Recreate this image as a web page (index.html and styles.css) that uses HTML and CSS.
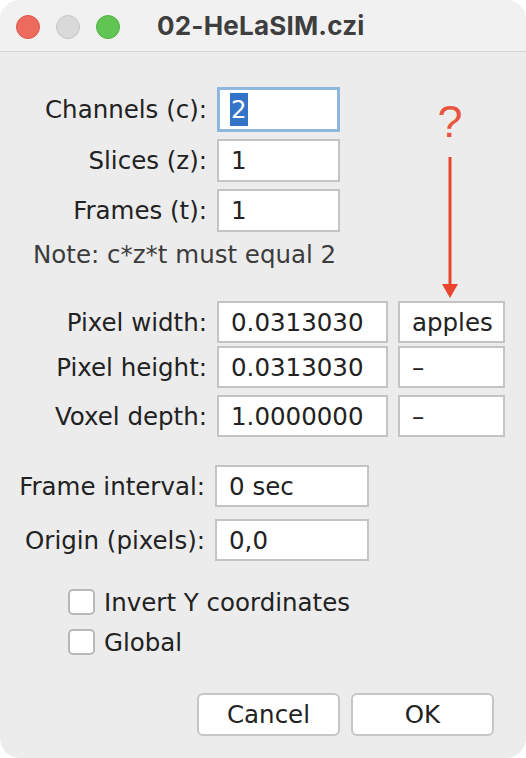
FILE: index.html
```html
<!DOCTYPE html>
<html>
<head>
<meta charset="utf-8">
<link rel="stylesheet" href="styles.css">
</head>
<body>
<div class="window">
  <div class="titlebar">
    <div class="lights">
      <span class="light red"></span>
      <span class="light gray"></span>
      <span class="light green"></span>
    </div>
    <div class="title">02-HeLaSIM.czi</div>
  </div>
  <div class="content">
    <div class="grid dims">
      <div class="label">Channels (c):</div>
      <div class="field small focus"><span class="sel">2</span></div>
      <div class="label">Slices (z):</div>
      <div class="field small">1</div>
      <div class="label">Frames (t):</div>
      <div class="field small">1</div>
    </div>
    <div class="note">Note: c*z*t must equal 2</div>
    <div class="grid3">
      <div class="label">Pixel width:</div>
      <div class="field wide">0.0313030</div>
      <div class="field unit">apples</div>
      <div class="label">Pixel height:</div>
      <div class="field wide">0.0313030</div>
      <div class="field unit">–</div>
      <div class="label">Voxel depth:</div>
      <div class="field wide">1.0000000</div>
      <div class="field unit">–</div>
    </div>
    <div class="grid misc">
      <div class="label">Frame interval:</div>
      <div class="field mid">0 sec</div>
      <div class="label">Origin (pixels):</div>
      <div class="field mid">0,0</div>
    </div>
    <div class="checks">
      <label class="check"><span class="box"></span>Invert Y coordinates</label>
      <label class="check"><span class="box"></span>Global</label>
    </div>
    <div class="buttons">
      <div class="btn">Cancel</div>
      <div class="btn">OK</div>
    </div>
  </div>
  <div class="annot">
    <div class="qmark">?</div>
    <svg class="arrow" width="20" height="145" viewBox="0 0 20 145">
      <line x1="10" y1="0" x2="10" y2="130" stroke="#e8452c" stroke-width="3"/>
      <polygon points="2,127 18,127 10,141" fill="#e8452c"/>
    </svg>
  </div>
</div>
</body>
</html>
```
FILE: styles.css
```css
html, body {
  margin: 0;
  padding: 0;
  background: #ffffff;
}
.window {
  position: relative;
  width: 526px;
  height: 758px;
  background: #ececec;
  border-radius: 20px;
  overflow: hidden;
  font-family: "DejaVu Sans", Verdana, sans-serif;
  color: #222222;
}
.titlebar {
  height: 51px;
  background: #f1f1f1;
  border-bottom: 1px solid #d6d6d6;
  display: flex;
  align-items: center;
}
.lights {
  display: flex;
  gap: 16px;
  padding-left: 16px;
  margin-top: 2px;
}
.light {
  width: 24px;
  height: 24px;
  border-radius: 50%;
  box-sizing: border-box;
}
.light.red { background: #ed6a5e; border: 1px solid #d9574c; }
.light.gray { background: #d9d9d9; border: 1px solid #c4c4c4; }
.light.green { background: #61c554; border: 1px solid #50b043; }
.title {
  margin-left: 37px;
  font-family: Inter, "Liberation Sans", sans-serif;
  font-weight: 700;
  font-size: 26px;
  color: #3e3e3e;
  letter-spacing: 0.2px;
}
.content {
  padding-top: 35px;
}
.grid {
  display: grid;
  grid-template-columns: 207px auto;
  column-gap: 10px;
  row-gap: 7px;
  align-items: center;
}
.label {
  text-align: right;
  font-size: 24.5px;
  white-space: nowrap;
}
.field {
  box-sizing: border-box;
  height: 43px;
  background: #ffffff;
  border: 2px solid #c4c4c4;
  font-size: 24.5px;
  display: flex;
  align-items: center;
  padding-left: 12px;
  white-space: nowrap;
}
.field.small { width: 123px; }
.field.focus {
  height: 45px;
  border: 3px solid #8fb6dd;
  padding-left: 10px;
}
.sel {
  background: #3474c8;
  color: #ffffff;
  padding: 2px 1px;
}
.note {
  margin-top: 10px;
  padding-left: 33px;
  font-size: 24.5px;
  color: #3c3c3c;
  height: 26px;
  line-height: 26px;
}
.grid3 {
  margin-top: 33px;
  display: grid;
  grid-template-columns: 207px 171px 107px;
  column-gap: 10px;
  row-gap: 3px;
  align-items: center;
}
.grid3 .field { height: 42px; }
.grid3 .field.unit { padding-left: 12px; }
.grid3 > :nth-child(n+7) { margin-top: 4px; }
.misc {
  margin-top: 28px;
  grid-template-columns: 205px auto;
  row-gap: 12px;
}
.field.mid { width: 154px; height: 42px; }
.checks {
  margin-top: 28px;
  padding-left: 68px;
  display: flex;
  flex-direction: column;
  gap: 14px;
}
.check {
  display: flex;
  align-items: center;
  font-size: 24.5px;
  height: 26px;
}
.box {
  box-sizing: border-box;
  width: 27px;
  height: 26px;
  border: 2px solid #b8b8b8;
  border-radius: 5px;
  background: #ffffff;
  margin-right: 9px;
}
.buttons {
  margin-top: 38px;
  display: flex;
  justify-content: flex-end;
  gap: 11px;
  padding-right: 32px;
}
.btn {
  box-sizing: border-box;
  width: 143px;
  height: 43px;
  background: #ffffff;
  border: 2px solid #c6c6c6;
  border-radius: 6px;
  font-size: 24.5px;
  display: flex;
  align-items: center;
  justify-content: center;
}
.annot {
  position: absolute;
  left: 430px;
  top: 99px;
  width: 40px;
  display: flex;
  flex-direction: column;
  align-items: center;
}
.qmark {
  font-family: "Liberation Sans", sans-serif;
  font-size: 45px;
  color: #e9553f;
  line-height: 45px;
}
.arrow {
  margin-top: 13px;
}
```
